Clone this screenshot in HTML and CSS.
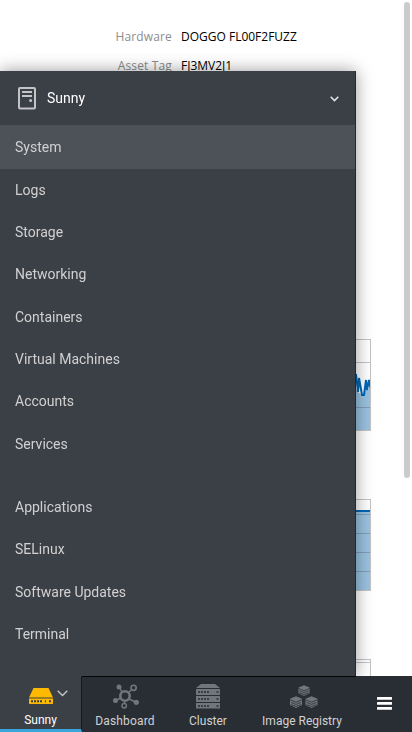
FILE: index.html
```html
<!DOCTYPE html>
<html lang="en">
<head>
<meta charset="utf-8">
<meta name="viewport" content="width=device-width, initial-scale=1">
<title>Sunny</title>
<link rel="stylesheet" href="styles.css">
</head>
<body>
<main class="page">
  <dl class="facts">
    <dt>Hardware</dt><dd>DOGGO FL00F2FUZZ</dd>
    <dt>Asset Tag</dt><dd>FJ3MV2J1</dd>
  </dl>
  <div class="charts">
    <svg class="chart" viewBox="0 0 341 92">
      <path class="area" d="M0 50H326L328 53L332 56H334L336 48L341 52V92H0z"/>
      <path class="grid" d="M0 23.5H341M0 46.5H326M0 68.5H341"/>
      <path class="line" d="M320 50L326 35L328 53L329 39L332 56H334L336 41L337 51L339 41L341 52"/>
      <rect class="frame" x=".5" y=".5" width="340" height="91"/>
    </svg>
    <svg class="chart" viewBox="0 0 341 92">
      <path class="area" d="M0 12H341V92H0z"/>
      <path class="grid" d="M0 15.500H341M0 34.500H341M0 53.500H341M0 72.500H341"/>
      <path class="line" d="M0 12H341"/>
      <rect class="frame" x=".5" y=".5" width="340" height="91"/>
    </svg>
    <svg class="chart" viewBox="0 0 341 92">
      <path class="grid" d="M0 3.500H341"/>
      <rect class="frame" x=".5" y=".5" width="340" height="91"/>
    </svg>
  </div>
</main>
<div class="scroll-thumb"></div>

<aside class="drawer">
  <header class="host">
    <svg class="host-icon" width="18" height="23" viewBox="0 0 18 23" fill="none" stroke="#c3c4c6">
      <rect x="1" y="1" width="16" height="20.500" rx="1" stroke-width="2"/>
      <path d="M4 5H14M4 9H14" stroke-width="2"/>
      <circle cx="12.600" cy="13.500" r="1.500" fill="#c3c4c6" stroke="none"/>
    </svg>
    <span class="host-name">Sunny</span>
    <svg class="host-caret" width="9" height="6" viewBox="0 0 9 6" fill="none" stroke="#e6e6e6" stroke-width="1.500"><path d="M.7 .8L4.500 4.600L8.300 .8"/></svg>
  </header>
  <nav class="menu">
    <a class="active">System</a>
    <a>Logs</a>
    <a>Storage</a>
    <a>Networking</a>
    <a>Containers</a>
    <a>Virtual Machines</a>
    <a>Accounts</a>
    <a>Services</a>
    <a class="group">Applications</a>
    <a>SELinux</a>
    <a>Software Updates</a>
    <a>Terminal</a>
  </nav>
</aside>

<nav class="tabs">
  <a class="tab current">
    <span class="icons">
      <svg width="24" height="16" viewBox="0 0 24 16">
        <path fill="#fdb900" d="M4.500 0H19.500L24 9.500H0zM0 10.500H24V15.200Q24 16 23.200 16H.8Q0 16 0 15.200z"/>
        <path stroke="#3b3f46" stroke-width="2" d="M2 13.300H4M5 13.300H7M8 13.300H10M11 13.300H13M16 13.300H17M20 13.300H22"/>
      </svg>
      <svg class="caret" width="11" height="7" viewBox="0 0 11 7" fill="none" stroke="#c4c5c7" stroke-width="1.400"><path d="M.7 .8L5.500 5.600L10.300 .8"/></svg>
    </span>
    <span>Sunny</span>
  </a>
  <a class="tab dashboard">
    <svg width="27" height="25" viewBox="0 0 27 25" fill="none" stroke="#72767b">
      <path stroke-width="1.500" d="M6.500 3.500L9 8M19 5.500L16 8M2.500 16.500L8 14M23.500 18.500L16 15M11.500 17V20"/>
      <circle cx="12" cy="12" r="4.700" stroke-width="2.600"/>
      <circle cx="20.600" cy="3.800" r="2.600" stroke-width="1.600"/>
      <circle cx="11.200" cy="21.700" r="2.200" stroke-width="1.500"/>
      <g fill="#72767b" stroke="none"><circle cx="6" cy="3" r="2.500"/><circle cx="2.500" cy="16.500" r="2.500"/><circle cx="23.300" cy="18.300" r="2.600"/></g>
    </svg>
    <span>Dashboard</span>
  </a>
  <a class="tab cluster">
    <svg width="24" height="25" viewBox="0 0 24 25">
      <path fill="#72767b" d="M5 0H19L24 4H0zM0 5H24V11H0zM0 12H24V18H0zM0 19H24V24.500H0z"/>
      <path stroke="#292e34" stroke-width="1.700" stroke-dasharray="2 1" d="M2 8H14M2 15H14M2 22H14"/>
      <path stroke="#292e34" stroke-width="1.700" d="M20.500 8H22.500M20.500 15H22.500M20.500 22H22.500"/>
    </svg>
    <span>Cluster</span>
  </a>
  <a class="tab registry">
    <svg width="28" height="24" viewBox="0 0 28 24">
      <defs><g id="stack">
        <path fill="#72767b" d="M0 2.800L6 .3L12 2.800V9L6 12L0 9z"/>
        <path fill="none" stroke="#292e34" stroke-width=".8" d="M0 3.800L6 6.200L12 3.800M1 6.400L6 8.400L11 6.400M1 8.600L6 10.500L11 8.600"/>
      </g></defs>
      <use href="#stack" transform="translate(8.500 0) scale(.92)"/>
      <use href="#stack" x="0" y="11"/>
      <use href="#stack" x="15.500" y="11"/>
    </svg>
    <span>Image Registry</span>
  </a>
  <a class="more">
    <svg width="15" height="13" viewBox="0 0 15 13" fill="#fff"><rect width="15" height="2.800" rx=".5"/><rect y="5" width="15" height="2.800" rx=".5"/><rect y="10" width="15" height="2.800" rx=".5"/></svg>
  </a>
</nav>
</body>
</html>
```
FILE: styles.css
```css
* { box-sizing: border-box; }

body {
  margin: 0;
  height: 732px;
  overflow: hidden;
  background: #fff;
  font-family: Roboto, "Liberation Sans", sans-serif;
}

.page { padding: 22px 41px 0 30px; }

.facts {
  display: grid;
  grid-template-columns: 142px 1fr;
  align-content: start;
  column-gap: 9px;
  margin: 0 0 237px;
  font: 12px/29px "Open Sans", sans-serif;
  color: #000;
  height: 80px;
}
.facts dt { color: #8b8d8f; text-align: right; height: 29px; letter-spacing: .15px; }
.facts dd { margin: 0; height: 29px; white-space: nowrap; }

.charts { display: flex; flex-direction: column; gap: 68px; }
.chart { display: block; width: 341px; height: 92px; }
.area { fill: #99c2e0; }
.grid { fill: none; stroke: rgba(80, 90, 105, .35); }
.line { fill: none; stroke: #0066b2; stroke-width: 2; }
.frame { fill: none; stroke: #c3c3c3; }

.scroll-thumb {
  position: fixed;
  top: 2px;
  left: 404px;
  width: 6px;
  height: 476px;
  border-radius: 3px;
  background: #cbcbcb;
}

.drawer {
  position: fixed;
  top: 71px;
  left: 0;
  width: 356px;
  height: 606px;
  background: #3b3f46;
  border-right: 1px solid #25292e;
  border-bottom: 1px solid #050505;
  box-shadow: 0 0 16px rgba(0, 0, 0, .4);
}

.host {
  display: flex;
  align-items: center;
  height: 54px;
  padding: 0 16px 0 18px;
  color: #fff;
  font-size: 14px;
}
.host-name { flex: 1; margin-left: 11px; }
.host-icon { margin-top: 1px; }
.host-caret { margin-top: 2px; }

.menu { display: flex; flex-direction: column; }
.menu a {
  height: 42.33px;
  padding-left: 15px;
  font-size: 14px;
  line-height: 42.33px;
  color: #d1d1d1;
}
.menu .active { height: 43.6px; line-height: 44px; background: #4d5259; }
.menu .group { margin-top: 21px; }

.tabs {
  position: fixed;
  left: 0;
  bottom: 0;
  display: flex;
  width: 412px;
  height: 56px;
  background: #292e34;
  color: #d1d1d1;
  font-size: 12px;
}
.tab {
  display: flex;
  flex-direction: column;
  align-items: center;
  justify-content: space-between;
  padding: 7px 0 3px;
  border-top: 1px solid #050505;
  line-height: 16px;
  white-space: nowrap;
}
.current {
  width: 82px;
  padding-top: 11px;
  padding-bottom: 1px;
  background: #3b3f46;
  border-top-color: #3b3f46;
  border-right: 1px solid #17191c;
  border-bottom: 3px solid #39a5dc;
  color: #fff;
}
.icons { display: flex; gap: 4px; margin-left: 15px; }
.caret { margin-top: 2px; }
.dashboard { width: 86px; letter-spacing: .15px; }
.dashboard svg { margin-left: 2px; }
.cluster { width: 80px; }
.registry { width: 108px; }
.registry svg { margin-top: 1px; margin-left: 3px; }
.more { flex: 1; display: flex; align-items: center; justify-content: center; padding-bottom: 2px; }
```
